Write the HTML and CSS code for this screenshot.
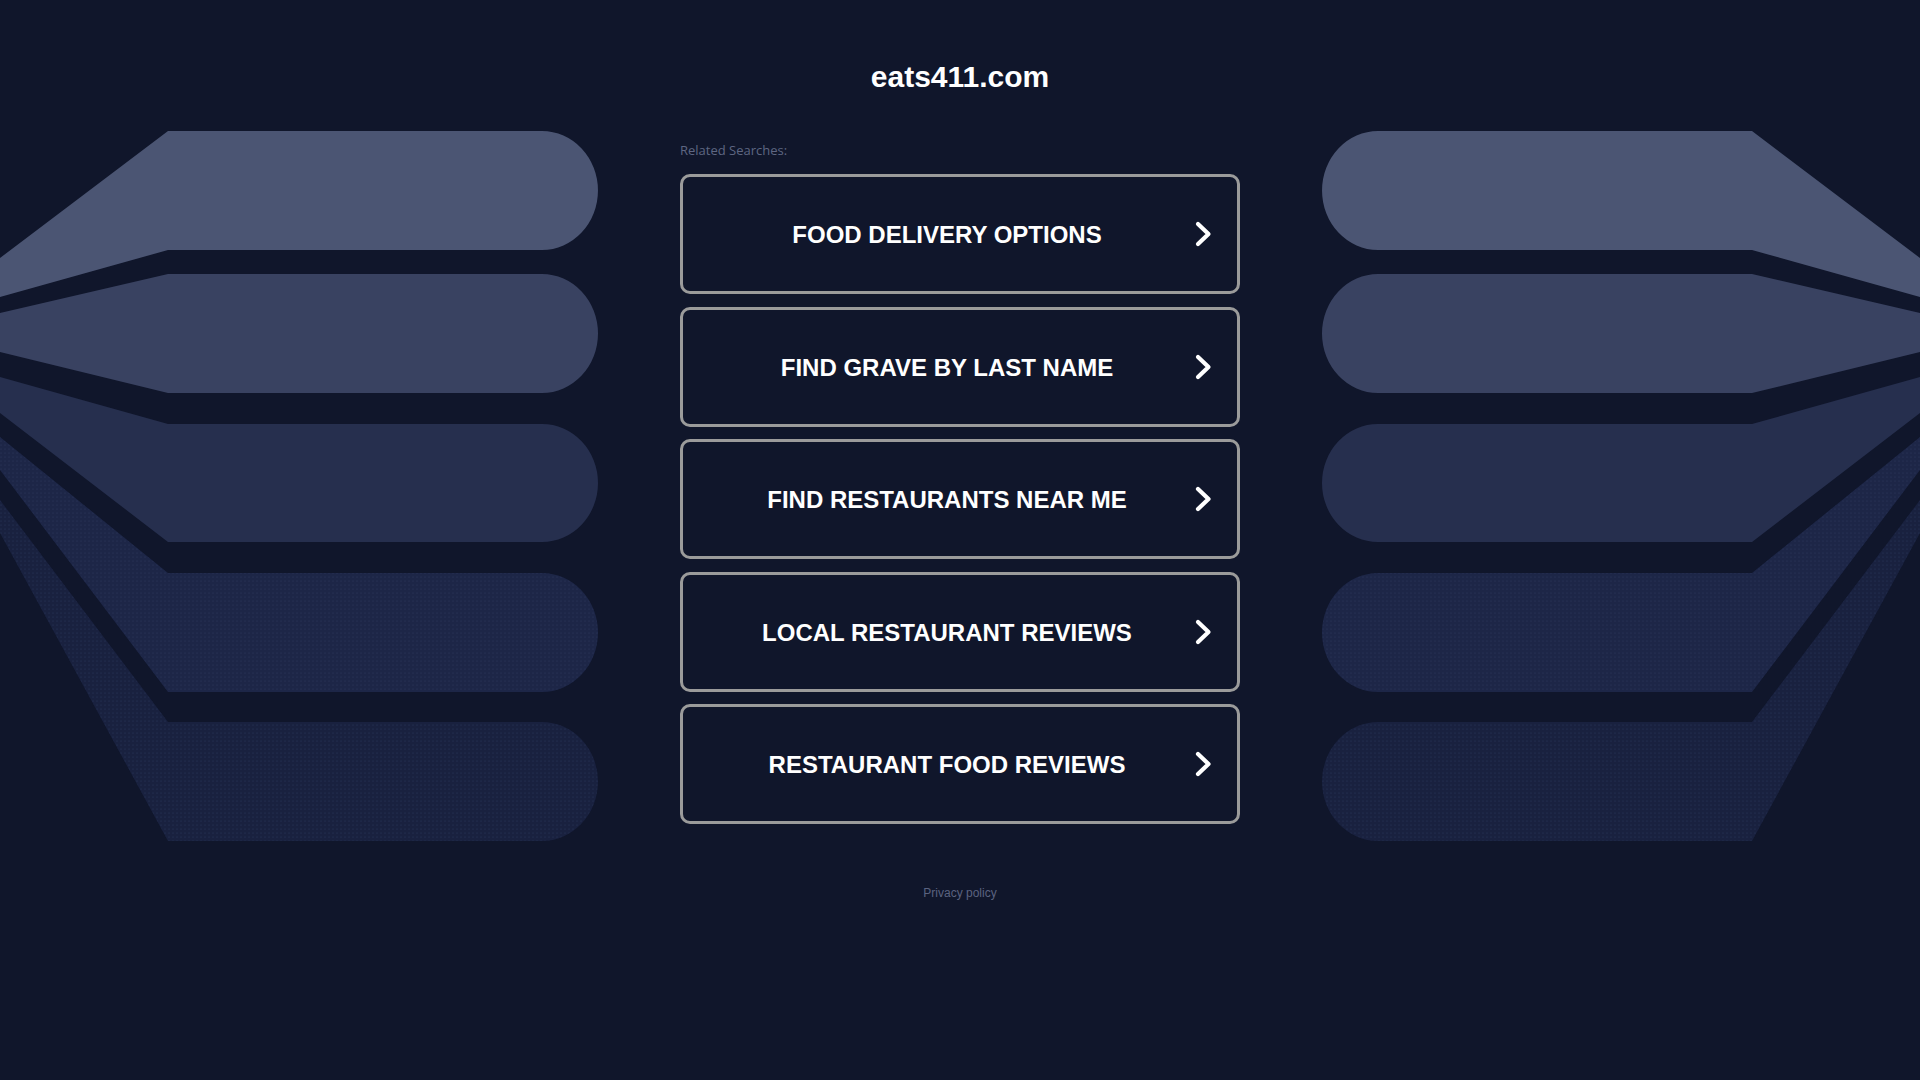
FILE: index.html
```html
<!DOCTYPE html>
<html lang="en">
<head>
<meta charset="utf-8">
<title>eats411.com</title>
<link rel="stylesheet" href="styles.css">
</head>
<body>
<svg class="backdrop" width="1920" height="1080" viewBox="0 0 1920 1080" aria-hidden="true">
  <defs>
    <pattern id="dots" width="4" height="4" patternUnits="userSpaceOnUse">
      <circle cx="1" cy="1" r="0.6" fill="#3a4670" fill-opacity="0.55"/>
    </pattern>
    <g id="fan">
      <path fill="#4b5573" d="M0,258 L168,131 L542,131 A56,59.5 0 0 1 542,250 L168,250 L0,297 Z"/>
      <path fill="#394261" d="M0,313 L168,274 L542,274 A56,59.5 0 0 1 542,393 L168,393 L0,352 Z"/>
      <path fill="#262f4e" d="M0,377 L168,424 L542,424 A56,59 0 0 1 542,542 L168,542 L0,413 Z"/>
      <path fill="#1d2647" d="M0,437 L168,573 L542,573 A56,59.5 0 0 1 542,692 L168,692 L0,470 Z"/>
      <path fill="url(#dots)" d="M0,437 L168,573 L542,573 A56,59.5 0 0 1 542,692 L168,692 L0,470 Z"/>
      <path fill="#19213f" d="M0,500 L168,722 L542,722 A56,59.5 0 0 1 542,841 L168,841 L0,533 Z"/>
      <path fill="url(#dots)" d="M0,500 L168,722 L542,722 A56,59.5 0 0 1 542,841 L168,841 L0,533 Z"/>
    </g>
  </defs>
  <use href="#fan"/>
  <use href="#fan" transform="matrix(-1 0 0 1 1920 0)"/>
</svg>

<main class="page">
  <h1 class="domain">eats411.com</h1>
  <p class="related">Related Searches:</p>
  <ul class="links">
    <li><a class="link" href="#"><span class="label">FOOD DELIVERY OPTIONS</span><svg class="chev" width="22" height="28" viewBox="0 0 22 28"><path d="M7 4 L17.5 14 L7 24"/></svg></a></li>
    <li><a class="link" href="#"><span class="label">FIND GRAVE BY LAST NAME</span><svg class="chev" width="22" height="28" viewBox="0 0 22 28"><path d="M7 4 L17.5 14 L7 24"/></svg></a></li>
    <li><a class="link" href="#"><span class="label">FIND RESTAURANTS NEAR ME</span><svg class="chev" width="22" height="28" viewBox="0 0 22 28"><path d="M7 4 L17.5 14 L7 24"/></svg></a></li>
    <li><a class="link" href="#"><span class="label">LOCAL RESTAURANT REVIEWS</span><svg class="chev" width="22" height="28" viewBox="0 0 22 28"><path d="M7 4 L17.5 14 L7 24"/></svg></a></li>
    <li><a class="link" href="#"><span class="label">RESTAURANT FOOD REVIEWS</span><svg class="chev" width="22" height="28" viewBox="0 0 22 28"><path d="M7 4 L17.5 14 L7 24"/></svg></a></li>
  </ul>
  <a class="privacy" href="#">Privacy policy</a>
</main>
</body>
</html>
```

FILE: styles.css
```css
html, body {
  margin: 0;
  padding: 0;
}

body {
  background: #10162b;
  width: 1920px;
  height: 1080px;
  overflow: hidden;
  position: relative;
  font-family: "Liberation Sans", Arial, sans-serif;
}

.backdrop {
  position: absolute;
  left: 0;
  top: 0;
  z-index: 0;
}

.page {
  position: relative;
  z-index: 1;
  width: 560px;
  margin: 0 auto;
  padding-top: 59px;
  display: flex;
  flex-direction: column;
}

.domain {
  margin: 0;
  font-size: 30px;
  line-height: 36px;
  font-weight: bold;
  color: #ffffff;
  text-align: center;
}

.related {
  margin: 46px 0 0;
  font-family: "Open Sans", "Liberation Sans", sans-serif;
  font-size: 13px;
  line-height: 18px;
  color: #5e6682;
}

.links {
  list-style: none;
  margin: 15px 0 0;
  padding: 0;
  display: flex;
  flex-direction: column;
  gap: 12.5px;
}

.link {
  box-sizing: border-box;
  height: 120px;
  display: flex;
  align-items: center;
  padding: 0 24px 0 20px;
  border: 3px solid #9b9b9b;
  border-radius: 10px;
  background: #10162b;
  text-decoration: none;
  color: #ffffff;
}

.label {
  flex: 1;
  text-align: center;
  font-size: 24px;
  font-weight: bold;
  line-height: 28px;
  padding-top: 2px;
}

.chev {
  flex: none;
  display: block;
}

.chev path {
  fill: none;
  stroke: #ffffff;
  stroke-width: 4.2;
  stroke-linecap: round;
  stroke-linejoin: round;
}

.privacy {
  margin-top: 61px;
  align-self: center;
  font-size: 12px;
  line-height: 16px;
  color: #5b6380;
  text-decoration: none;
}
```
